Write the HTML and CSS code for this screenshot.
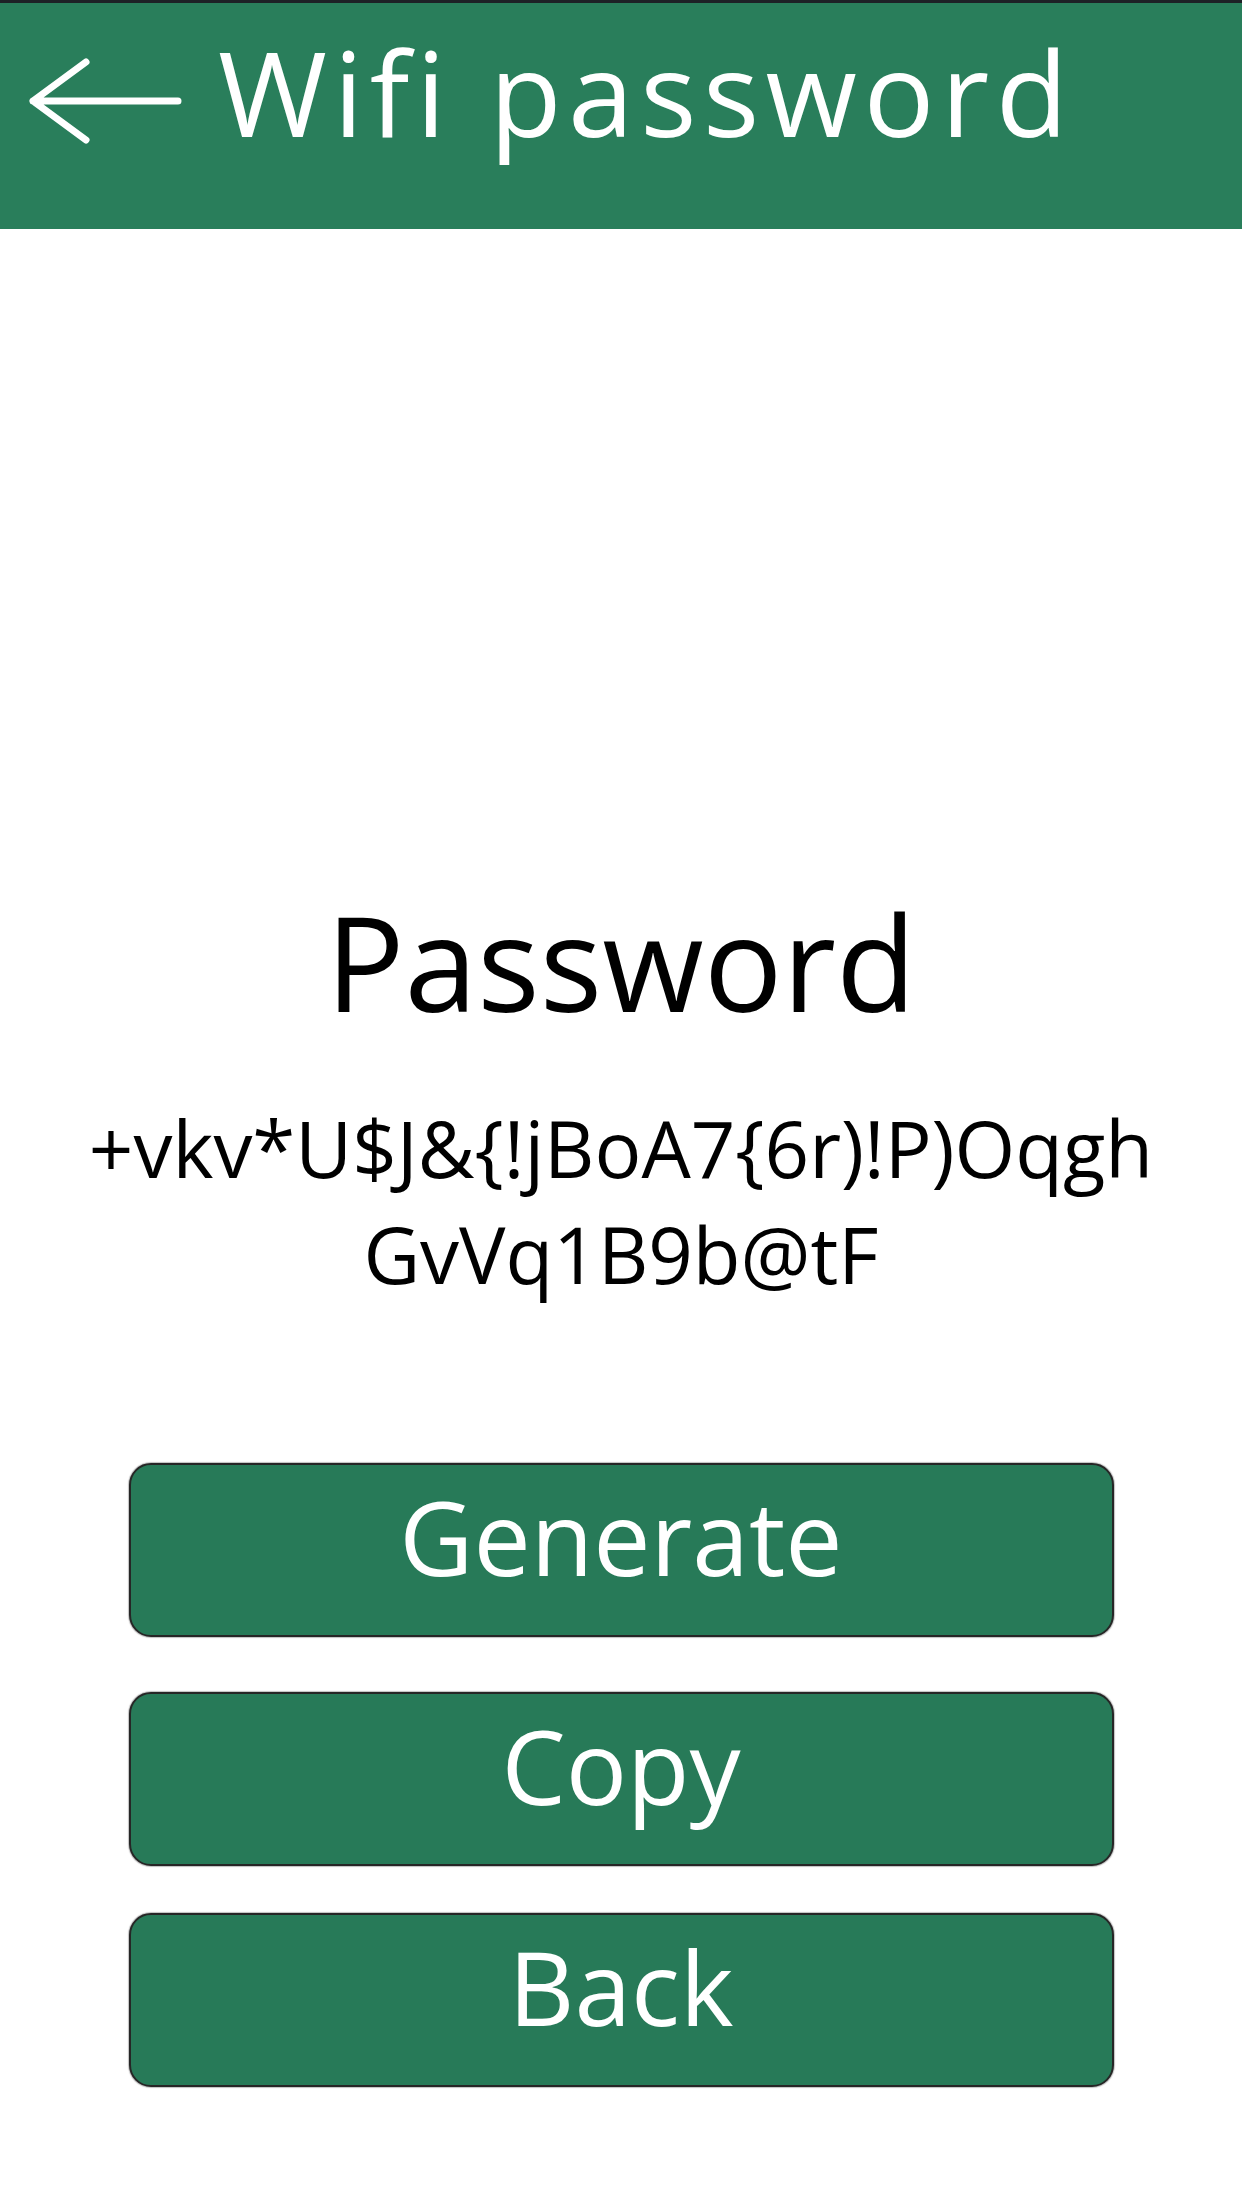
FILE: index.html
```html
<!DOCTYPE html>
<html lang="en">
<head>
<meta charset="utf-8">
<title>Wifi password</title>
<link rel="stylesheet" href="styles.css">
</head>
<body>
<div class="status-strip"></div>
<header class="app-bar">
  <svg class="back-icon" width="160" height="92" viewBox="0 0 160 92" aria-hidden="true">
    <path d="M7 46 H152 M60 7 L7 46 L60 85" fill="none" stroke="#ffffff" stroke-width="7" stroke-linecap="round" stroke-linejoin="round"/>
  </svg>
  <h1 class="app-title">Wifi password</h1>
</header>
<main class="content">
  <h2 class="heading">Password</h2>
  <p class="password">+vkv*U$J&amp;{!jBoA7{6r)!P)Oqgh<br>GvVq1B9b@tF</p>
  <div class="actions">
    <button class="btn btn-generate">Generate</button>
    <button class="btn">Copy</button>
    <button class="btn">Back</button>
  </div>
</main>
</body>
</html>
```
FILE: styles.css
```css
html, body {
  margin: 0;
  padding: 0;
  background: #ffffff;
}

body {
  width: 1242px;
  height: 2208px;
  overflow: hidden;
  font-family: "Open Sans", "Noto Sans", sans-serif;
}

.status-strip {
  height: 3px;
  background: #1d2126;
}

.app-bar {
  height: 226px;
  background: #297e5b;
  display: flex;
  align-items: flex-start;
}

.back-icon {
  display: block;
  margin-left: 26px;
  margin-top: 52px;
  flex: none;
}

.app-title {
  margin: 9px 0 0 32px;
  font-size: 118px;
  line-height: 160px;
  font-weight: 400;
  letter-spacing: 6.5px;
  color: #ffffff;
  white-space: nowrap;
}

.content {
  display: flex;
  flex-direction: column;
  align-items: center;
}

.heading {
  margin: 652px 0 0;
  font-size: 131px;
  line-height: 160px;
  font-weight: 400;
  color: #000000;
}

.password {
  margin: 54px 0 0;
  font-size: 78px;
  line-height: 106px;
  text-align: center;
  color: #000000;
  white-space: nowrap;
}

.actions {
  margin-top: 156px;
  display: flex;
  flex-direction: column;
  gap: 47px;
}

.btn {
  box-sizing: border-box;
  width: 985px;
  height: 174px;
  padding: 0 0 26px;
  border: 2px solid #262626;
  border-radius: 22px;
  background: #277a58;
  color: #ffffff;
  font-family: "Open Sans", "Noto Sans", sans-serif;
  font-size: 102px;
  line-height: 144px;
  text-align: center;
  box-shadow: 0 0 1px 1px rgba(0, 0, 0, 0.25);
}

.btn-generate {
  margin-bottom: 8px;
}
```
